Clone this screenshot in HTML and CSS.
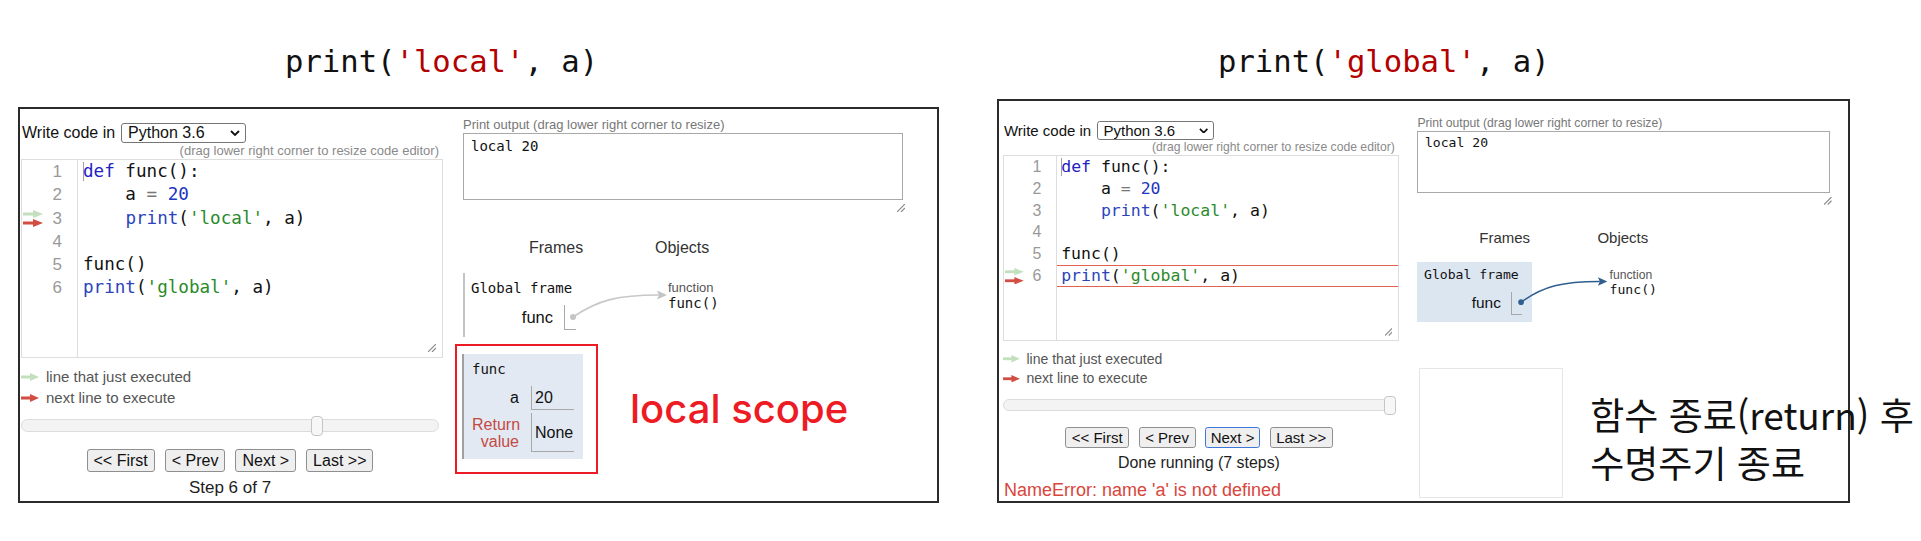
FILE: index.html
```html
<!DOCTYPE html>
<html lang="ko">
<head>
<meta charset="utf-8">
<title>Python Tutor - local vs global</title>
<link rel="stylesheet" href="styles.css">
</head>
<body>
<div class="page">

  <section class="slide slide--left">
    <h2 class="title">print(<span class="str">'local'</span>, a)</h2>
    <div class="panel">
      <div class="panel-body">
        <div class="code-col">
          <div class="lang-row">
            <span>Write code in</span>
            <div class="select"><span>Python 3.6</span><svg class="chevron" width="10" height="6" viewBox="0 0 10 6"><path d="M1 1l4 4 4-4"/></svg></div>
          </div>
          <div class="drag-note">(drag lower right corner to resize code editor)</div>
          <div class="editor">
            <div class="gutter">
              <div class="ln">1</div>
              <div class="ln">2</div>
              <div class="ln">3
                <svg class="garrow garrow--prev" width="20" height="8" viewBox="0 0 20 8"><rect x="0" y="2.5" width="11" height="3"/><polygon points="10,0 20,4 10,8"/></svg>
                <svg class="garrow garrow--next" width="20" height="8" viewBox="0 0 20 8"><rect x="0" y="2.5" width="11" height="3"/><polygon points="10,0 20,4 10,8"/></svg>
              </div>
              <div class="ln">4</div>
              <div class="ln">5</div>
              <div class="ln">6</div>
            </div>
            <div class="code">
              <div class="cl"><span class="cursor"></span><span class="kw">def</span> func():</div>
              <div class="cl">    a <span class="op">=</span> <span class="num">20</span></div>
              <div class="cl">    <span class="bi">print</span>(<span class="s">'local'</span>, a)</div>
              <div class="cl">&nbsp;</div>
              <div class="cl">func()</div>
              <div class="cl"><span class="bi">print</span>(<span class="s">'global'</span>, a)</div>
            </div>
            <svg class="grip grip--editor" width="8" height="8" viewBox="0 0 8 8"><path d="M8 0L0 8M8 4L4 8"/></svg>
          </div>
          <div class="legend">
            <div class="legend-item"><svg class="larrow larrow--prev" width="18" height="8" viewBox="0 0 18 8"><rect x="0" y="2.5" width="10" height="3"/><polygon points="9,0 18,4 9,8"/></svg>line that just executed</div>
            <div class="legend-item"><svg class="larrow larrow--next" width="18" height="8" viewBox="0 0 18 8"><rect x="0" y="2.5" width="10" height="3"/><polygon points="9,0 18,4 9,8"/></svg>next line to execute</div>
          </div>
          <div class="slider"><span class="slider-handle" style="left:71%"></span></div>
          <div class="buttons">
            <button class="btn">&lt;&lt; First</button>
            <button class="btn">&lt; Prev</button>
            <button class="btn">Next &gt;</button>
            <button class="btn">Last &gt;&gt;</button>
          </div>
          <div class="step">Step 6 of 7</div>
        </div>

        <div class="viz-col">
          <div class="print-label">Print output (drag lower right corner to resize)</div>
          <div class="output-wrap">
            <div class="output">local 20</div>
            <svg class="grip grip--output" width="8" height="8" viewBox="0 0 8 8"><path d="M8 0L0 8M8 4L4 8"/></svg>
          </div>
          <div class="diagram">
            <div class="heading heading--frames">Frames</div>
            <div class="heading heading--objects">Objects</div>
            <div class="frame">
              <div class="frame-name">Global frame</div>
              <div class="frame-row">
                <div class="var-name">func</div>
                <div class="var-value var-value--ptr"></div>
              </div>
            </div>
            <div class="heap-item">
              <div class="obj-type">function</div>
              <div class="obj-val">func()</div>
            </div>
            <div class="callout">
              <div class="scope-box">
                <div class="frame frame--local">
                  <div class="frame-name">func</div>
                  <div class="frame-row frame-row--a">
                    <div class="var-name">a</div>
                    <div class="var-value">20</div>
                  </div>
                  <div class="frame-row frame-row--ret">
                    <div class="var-name var-name--ret">Return<br>value</div>
                    <div class="var-value">None</div>
                  </div>
                </div>
              </div>
              <div class="scope-note">local scope</div>
            </div>
            <svg class="links links--muted" width="240" height="112" viewBox="0 0 240 112">
              <path d="M110 79C135 62 155 57 196 57" fill="none"/>
              <polygon points="204,57 194,52.5 196,57 194,61.5"/>
              <circle cx="110" cy="79" r="3"/>
            </svg>
          </div>
        </div>
      </div>
    </div>
  </section>

  <section class="slide slide--right">
    <h2 class="title">print(<span class="str">'global'</span>, a)</h2>
    <div class="panel">
      <div class="panel-body">
        <div class="code-col">
          <div class="lang-row">
            <span>Write code in</span>
            <div class="select"><span>Python 3.6</span><svg class="chevron" width="10" height="6" viewBox="0 0 10 6"><path d="M1 1l4 4 4-4"/></svg></div>
          </div>
          <div class="drag-note">(drag lower right corner to resize code editor)</div>
          <div class="editor">
            <div class="gutter">
              <div class="ln">1</div>
              <div class="ln">2</div>
              <div class="ln">3</div>
              <div class="ln">4</div>
              <div class="ln">5</div>
              <div class="ln">6
                <svg class="garrow garrow--prev" width="20" height="8" viewBox="0 0 20 8"><rect x="0" y="2.5" width="11" height="3"/><polygon points="10,0 20,4 10,8"/></svg>
                <svg class="garrow garrow--next" width="20" height="8" viewBox="0 0 20 8"><rect x="0" y="2.5" width="11" height="3"/><polygon points="10,0 20,4 10,8"/></svg>
              </div>
            </div>
            <div class="code">
              <div class="cl"><span class="cursor"></span><span class="kw">def</span> func():</div>
              <div class="cl">    a <span class="op">=</span> <span class="num">20</span></div>
              <div class="cl">    <span class="bi">print</span>(<span class="s">'local'</span>, a)</div>
              <div class="cl">&nbsp;</div>
              <div class="cl">func()</div>
              <div class="cl cl--current"><span class="bi">print</span>(<span class="s">'global'</span>, a)</div>
            </div>
            <svg class="grip grip--editor" width="8" height="8" viewBox="0 0 8 8"><path d="M8 0L0 8M8 4L4 8"/></svg>
          </div>
          <div class="legend">
            <div class="legend-item"><svg class="larrow larrow--prev" width="18" height="8" viewBox="0 0 18 8"><rect x="0" y="2.5" width="10" height="3"/><polygon points="9,0 18,4 9,8"/></svg>line that just executed</div>
            <div class="legend-item"><svg class="larrow larrow--next" width="18" height="8" viewBox="0 0 18 8"><rect x="0" y="2.5" width="10" height="3"/><polygon points="9,0 18,4 9,8"/></svg>next line to execute</div>
          </div>
          <div class="slider"><span class="slider-handle" style="left:99%"></span></div>
          <div class="buttons">
            <button class="btn">&lt;&lt; First</button>
            <button class="btn">&lt; Prev</button>
            <button class="btn is-focused">Next &gt;</button>
            <button class="btn">Last &gt;&gt;</button>
          </div>
          <div class="step">Done running (7 steps)</div>
          <div class="error">NameError: name 'a' is not defined</div>
        </div>

        <div class="viz-col">
          <div class="print-label">Print output (drag lower right corner to resize)</div>
          <div class="output-wrap">
            <div class="output">local 20</div>
            <svg class="grip grip--output" width="8" height="8" viewBox="0 0 8 8"><path d="M8 0L0 8M8 4L4 8"/></svg>
          </div>
          <div class="diagram">
            <div class="heading heading--frames">Frames</div>
            <div class="heading heading--objects">Objects</div>
            <div class="frame frame--active">
              <div class="frame-name">Global frame</div>
              <div class="frame-row">
                <div class="var-name">func</div>
                <div class="var-value var-value--ptr"></div>
              </div>
            </div>
            <div class="heap-item">
              <div class="obj-type">function</div>
              <div class="obj-val">func()</div>
            </div>
            <div class="callout callout--ended">
              <div class="scope-box scope-box--empty"></div>
              <div class="scope-note scope-note--ko">
                <div class="ko-line">함수 종료(return) 후</div>
                <div class="ko-line">수명주기 종료</div>
              </div>
            </div>
            <svg class="links links--active" width="240" height="112" viewBox="0 0 240 112">
              <path d="M111 78C135 61 155 56 195 56" fill="none"/>
              <polygon points="203,56 193,51.5 195,56 193,60.5"/>
              <circle cx="111" cy="78" r="3"/>
            </svg>
          </div>
        </div>
      </div>
    </div>
  </section>

</div>
</body>
</html>
```

FILE: styles.css
```css
* { box-sizing: border-box; }

body {
  margin: 0;
  background: #ffffff;
  color: #111111;
  font-family: "Liberation Sans", Arial, sans-serif;
}

.page {
  display: flex;
  align-items: flex-start;
  width: 1921px;
  height: 541px;
  overflow: hidden;
}

.slide { flex: none; }
.slide--left { margin-left: 18px; width: 921px; }
.slide--right { margin-left: 58px; width: 853px; }

.title {
  margin: 42px 0 0;
  height: 40px;
  line-height: 40px;
  font-family: "DejaVu Sans Mono", "Liberation Mono", monospace;
  font-weight: 400;
  font-size: 30.6px;
  color: #111;
  white-space: pre;
}
.slide--left .title { padding-left: 267px; }
.slide--right .title { padding-left: 221px; }
.title .str { color: #b30000; }

.panel { border: 2px solid #2b2b2b; }
.slide--left .panel { margin-top: 25px; padding: 0 0 2px 1px; }
.slide--right .panel { margin-top: 17px; padding: 7px 0 0 4px; }

.panel-body {
  display: flex;
  align-items: flex-start;
  font-size: 16px;
}
.slide--right .panel-body { zoom: 0.9375; }

/* ---------- code column ---------- */
.code-col { width: 422px; flex: none; }

.lang-row {
  margin-top: 14px;
  height: 20px;
  display: flex;
  align-items: center;
  gap: 6px;
  padding-left: 1px;
  font-size: 16px;
}

.select {
  width: 125px;
  height: 20px;
  border: 1px solid #767676;
  border-radius: 3px;
  padding: 0 5px 0 6px;
  display: flex;
  align-items: center;
  justify-content: space-between;
  font-size: 16px;
  background: #fff;
}
.chevron path { fill: none; stroke: #111; stroke-width: 1.8; }

.drag-note {
  height: 16px;
  line-height: 16px;
  font-size: 13px;
  color: #8a8a8a;
  text-align: right;
  padding-right: 4px;
}

.editor {
  position: relative;
  height: 199px;
  border: 1px solid #dddddd;
  display: flex;
  background: #fff;
}

.gutter {
  width: 56px;
  flex: none;
  border-right: 1px solid #dddddd;
  padding-right: 15px;
  text-align: right;
  font-size: 17px;
  color: #999999;
}
.ln {
  position: relative;
  height: 23.3px;
  line-height: 23.3px;
}

.garrow { position: absolute; left: 1px; }
.garrow--prev { top: 3.6px; fill: #c3dfbd; }
.garrow--next { top: 12.2px; fill: #d24d42; }

.code {
  flex: 1;
  font-family: "DejaVu Sans Mono", monospace;
  font-size: 17.6px;
  color: #111;
}
.cl {
  height: 23.3px;
  line-height: 23.3px;
  padding-left: 5px;
  white-space: pre;
}
.cl--current { box-shadow: inset 0 1px #e5604e, inset 0 -1px #e5604e; }
.cursor {
  display: inline-block;
  width: 0;
  height: 19px;
  margin-right: -1px;
  border-left: 1px solid #a0a0a0;
  vertical-align: -4px;
}
.kw { color: #2222c4; }
.bi { color: #2b44bb; }
.num { color: #2233c0; }
.op { color: #777; }
.s { color: #2b8a2b; }

.grip { position: absolute; }
.grip path { fill: none; stroke: #8a8a8a; stroke-width: 1.2; }
.grip--editor { right: 6px; bottom: 5px; }
.grip--output { right: -2px; top: 71px; }

.legend {
  margin-top: 8px;
  font-size: 15px;
  color: #555;
}
.legend-item {
  height: 21px;
  display: flex;
  align-items: center;
  gap: 7px;
}
.larrow--prev { fill: #c3dfbd; }
.larrow--next { fill: #d24d42; }

.slider {
  position: relative;
  height: 13px;
  margin: 11px 4px 0 0;
  background: #f3f3f3;
  border: 1px solid #dcdcdc;
  border-radius: 7px;
}
.slider-handle {
  position: absolute;
  top: -4px;
  width: 12px;
  height: 20px;
  margin-left: -6px;
  background: #f7f7f7;
  border: 1px solid #c5c5c5;
  border-radius: 4px;
}

.buttons {
  margin: 17px 4px 0 0;
  display: flex;
  justify-content: center;
  gap: 10px;
}
.btn {
  height: 23px;
  padding: 0 6px;
  font-family: "Liberation Sans", Arial, sans-serif;
  font-size: 16px;
  color: #111;
  background: #efefef;
  border: 1px solid #8f8f8f;
  border-radius: 3px;
}
.btn.is-focused {
  border: 2px solid #3d78d8;
  padding: 0 5px;
}

.step {
  margin: 5px 4px 0 0;
  height: 22px;
  line-height: 22px;
  text-align: center;
  font-size: 17px;
  color: #1e1e1e;
}

.error {
  margin-top: 8px;
  height: 21px;
  line-height: 21px;
  font-size: 19.2px;
  color: #d8463c;
  padding-left: 1px;
}

/* ---------- visualization column ---------- */
.viz-col { width: 440px; flex: none; margin-left: 20px; }

.print-label {
  margin-top: 8px;
  height: 16px;
  line-height: 16px;
  font-size: 13px;
  color: #777;
}

.output-wrap { position: relative; height: 83px; }
.output {
  height: 67px;
  border: 1px solid #a9a9a9;
  padding: 4px 7px;
  font-family: "DejaVu Sans Mono", monospace;
  font-size: 14px;
  line-height: 17px;
  color: #111;
}

.diagram {
  position: relative;
  margin-top: 22px;
  display: grid;
  grid-template-columns: 192px 1fr;
  align-items: start;
}

.heading {
  height: 20px;
  line-height: 20px;
  font-size: 16px;
  color: #333;
}
.heading--frames { padding-left: 66px; }

.frame {
  margin-top: 15px;
  width: 122px;
  border-left: 2px solid #c4c4c4;
  padding: 6px 0 7px 6px;
}
.frame--active {
  background: #dce6f1;
  border-left-color: transparent;
}
.frame-name {
  height: 18px;
  line-height: 18px;
  font-family: "DejaVu Sans Mono", monospace;
  font-size: 14px;
  color: #111;
}
.frame-row {
  margin-top: 8px;
  display: flex;
  align-items: center;
}
.var-name {
  width: 93px;
  padding-right: 11px;
  text-align: right;
  font-size: 16.5px;
  color: #111;
}
.var-value {
  border-left: 1px solid #a8a8a8;
  border-bottom: 1px solid #a8a8a8;
  font-size: 16px;
  color: #111;
}
.var-value--ptr { width: 12px; height: 25px; }

.heap-item { margin-top: 22px; padding-left: 13px; }
.obj-type {
  height: 15px;
  line-height: 15px;
  font-size: 13px;
  color: #555;
}
.obj-val {
  height: 17px;
  line-height: 17px;
  font-family: "DejaVu Sans Mono", monospace;
  font-size: 14px;
  color: #111;
}

.callout {
  grid-column: 1 / -1;
  margin: 7px 0 0 -8px;
  display: flex;
  align-items: center;
}
.callout--ended {
  margin: 49px 0 0 2px;
  align-items: flex-start;
}

.scope-box {
  flex: none;
  border: 2px solid #ed1c24;
  padding: 8px 13px 13px 5px;
}
.scope-box--empty {
  width: 153.6px;
  height: 138.7px;
  padding: 0;
  border-color: #e6e6e6;
}

.frame--local {
  margin-top: 0;
  width: 121px;
  background: #e2e9f2;
  border-left: 2px solid #a0a0a0;
  padding: 6px 0 7px 8px;
}
.frame--local .var-name {
  width: 59px;
  padding-right: 12px;
  font-size: 16px;
}
.frame--local .var-value {
  width: 43px;
  padding-left: 3px;
}
.frame-row--a .var-value { height: 24px; line-height: 24px; }
.frame-row--ret { margin-top: 3px; }
.frame-row--ret .var-value { height: 39px; line-height: 39px; }
.var-name--ret {
  font-size: 14.5px;
  line-height: 17px;
  color: #c44a44;
}

.scope-note {
  flex: none;
  margin-left: 32px;
  font-family: "Inter", "Liberation Sans", sans-serif;
  font-weight: 500;
  font-size: 40px;
  line-height: 44px;
  color: #ed1c24;
  white-space: nowrap;
}
.scope-note--ko {
  margin: 23.5px 0 0 28.8px;
  font-family: "Noto Sans CJK KR", "Noto Sans", sans-serif;
  font-weight: 400;
  font-size: 39.5px;
  line-height: 51.2px;
  color: #111;
  position: relative;
}
.ko-line { height: 51.2px; }

.links {
  position: absolute;
  left: 0;
  top: 0;
  pointer-events: none;
}
.links path { stroke-width: 1.6; }
.links--muted path { stroke: #c8c8c8; }
.links--muted polygon, .links--muted circle { fill: #c4c4c4; }
.links--active path { stroke: #2f5f8e; }
.links--active polygon, .links--active circle { fill: #2f5f8e; }
```
